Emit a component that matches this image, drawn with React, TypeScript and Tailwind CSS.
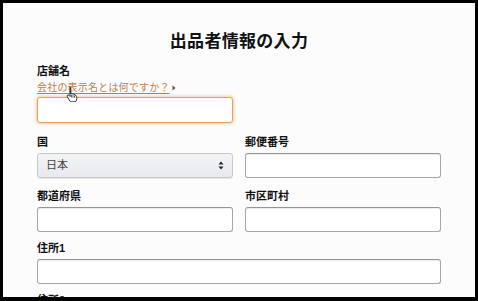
import React from "react";

const font = { fontFamily: '"Liberation Sans", Arial, "Noto Sans CJK JP", sans-serif' };

function Label({ children, className = "" }: { children: React.ReactNode; className?: string }) {
  return (
    <div className={`text-[11px] leading-[14px] font-bold text-[#111] ${className}`}>{children}</div>
  );
}

function Input({ className = "" }: { className?: string }) {
  return (
    <div
      className={`h-[25px] rounded-[3px] border border-[#a6a6a6] border-t-[#949494] bg-white shadow-[inset_0_1px_0_rgba(0,0,0,0.07)] ${className}`}
    />
  );
}

function Cursor() {
  return (
    <svg width="12" height="16" viewBox="0 0 12 16" className="absolute left-[29px] top-[5px]">
      <path
        d="M3.5 1.2c.7 0 1.2.5 1.2 1.2v5l.4-.1c.6-.2 1.2.1 1.4.6l.1.2c.5-.3 1.2-.2 1.5.3l.1.2c.5-.2 1.1 0 1.4.5l.9 1.6c.3.6.4 1.2.3 1.8l-.4 1.9c-.1.8-.8 1.4-1.6 1.4H5.2c-.5 0-1-.3-1.3-.7L1.3 10.8c-.4-.5-.3-1.2.2-1.6.5-.4 1.2-.3 1.6.2l.9 1V2.4c0-.7.1-1.2-.5-1.2z"
        fill="#fff"
        stroke="#111"
        strokeWidth="0.9"
      />
      <path d="M5.4 8.5v3M7 9v2.7M8.5 9.6v2.2" stroke="#111" strokeWidth="0.7" />
    </svg>
  );
}

export default function App() {
  return (
    <div className="w-[478px] h-[301px] bg-black pt-[3px] pl-[3px] pr-[3px] pb-[4px] flex" style={font}>
      <div className="flex-1 bg-[#fcfcfd] overflow-hidden px-[34px] pt-[27px]">
        <h1 className="text-center text-[17px] leading-[24px] font-bold text-[#111] tracking-[0.3px]">
          出品者情報の入力
        </h1>
        <div className="mt-[10px]">
          <Label>店舗名</Label>
          <div className="relative mt-[3px] flex items-center h-[14px]">
            <span className="text-[10px] leading-[14px] text-[#c27a45] underline underline-offset-[2px] decoration-[#c27a45] tracking-[0.2px]">
              会社の表示名とは何ですか？
            </span>
            <svg width="4" height="6" viewBox="0 0 4 6" className="ml-[2px]">
              <path d="M0.5 0.5L3.5 3L0.5 5.5z" fill="#555" />
            </svg>
            <Cursor />
          </div>
          <div className="mt-[2px] w-[196px] h-[26px] rounded-[3px] border border-[#e2a25a] bg-white shadow-[0_0_3px_1px_rgba(228,121,17,0.35)]" />
        </div>
        <div className="mt-[12px] grid grid-cols-2 gap-x-[12px]">
          <div>
            <Label>国</Label>
            <div className="mt-[4px] h-[25px] rounded-[3px] border border-[#c8c8cc] bg-gradient-to-b from-[#f3f4f7] to-[#e8e9ee] shadow-[0_1px_0_rgba(0,0,0,0.08)] flex items-center px-[8px] justify-between">
              <span className="text-[11px] text-[#444]">日本</span>
              <svg width="6" height="9" viewBox="0 0 6 9">
                <path d="M3 0.5L5.5 3.5H0.5z M3 8.5L5.5 5.5H0.5z" fill="#222" />
              </svg>
            </div>
          </div>
          <div>
            <Label>郵便番号</Label>
            <Input className="mt-[4px]" />
          </div>
        </div>
        <div className="mt-[11px] grid grid-cols-2 gap-x-[12px]">
          <div>
            <Label>都道府県</Label>
            <Input className="mt-[4px]" />
          </div>
          <div>
            <Label>市区町村</Label>
            <Input className="mt-[4px]" />
          </div>
        </div>
        <div className="mt-[9px]">
          <Label>住所1</Label>
          <Input className="mt-[4px]" />
        </div>
        <div className="mt-[9px]">
          <Label>住所2</Label>
          <Input className="mt-[4px]" />
        </div>
      </div>
    </div>
  );
}
